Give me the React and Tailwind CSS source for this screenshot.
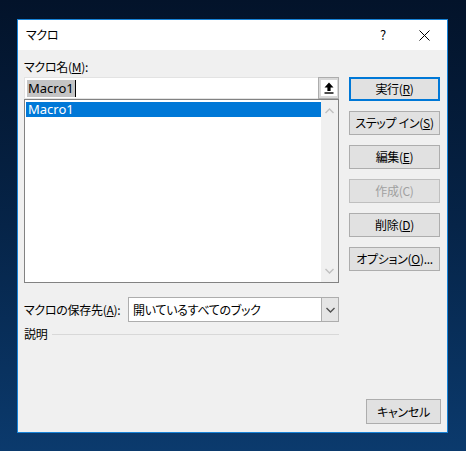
import React from "react";

const Btn = ({ children, primary, disabled }) => (
  <button
    type="button"
    className={
      "h-[24px] w-[91px] bg-[#e1e1e1] text-[12px] leading-none whitespace-nowrap " +
      (primary
        ? "border-2 border-[#0078d7] "
        : "border border-[#adadad] ") +
      (disabled ? "text-[#a0a0a0] border-[#bfbfbf] bg-[#cccccc]" : "text-black")
    }
  >
    {children}
  </button>
);

const Chevron = ({ up, color }) => (
  <svg width="9" height="6" viewBox="0 0 9 6">
    <path
      d={up ? "M0.5 5L4.5 1L8.5 5" : "M0.5 1L4.5 5L8.5 1"}
      fill="none"
      stroke={color}
      strokeWidth="1.4"
    />
  </svg>
);

const App = () => {
  return (
    <div className="w-[466px] h-[451px] overflow-hidden bg-gradient-to-b from-[#03132a] via-[#062448] to-[#0b3a6d] pt-[19px] pl-[17px] font-['Noto_Sans_CJK_JP','Noto_Sans',sans-serif] [font-feature-settings:'palt'] tracking-[-0.3px]">
      <div className="w-[431px] h-[414px] border border-[#1883d7] bg-[#f0f0f0] flex flex-col">
        {/* title bar */}
        <div className="h-[30px] bg-white flex items-center pl-[8px] text-[12px] text-black">
          <span className="flex-1">マクロ</span>
          <span className="w-[20px] text-center mr-[26px] text-[13px]">?</span>
          <svg width="11" height="11" viewBox="0 0 11 11" className="mr-[17px]">
            <path d="M0.5 0.5L10.5 10.5M10.5 0.5L0.5 10.5" stroke="#000" strokeWidth="1" />
          </svg>
        </div>

        <div className="flex-1 flex flex-col pl-[6px] pr-[6px] pb-[8px] text-[12px] text-black">
          <div className="mt-[9px] h-[16px] leading-[16px]">
            マクロ名(<u>M</u>):
          </div>

          <div className="mt-[2px] flex gap-[10px]">
            {/* left column */}
            <div className="w-[315px] flex flex-col">
              <div className="h-[22px] bg-white border border-[#e3e3e3] border-r-0 flex items-center">
                <div className="flex-1 flex items-center pl-[2px]">
                  <span className="bg-[#c4c4c4] text-[13px] leading-[17px] px-[1px] font-['Noto_Sans',sans-serif] tracking-normal">
                    Macro1
                  </span>
                  <span className="w-px h-[17px] bg-black" />
                </div>
                <div className="w-[21px] h-[22px] bg-[#d9d9d9] border border-[#adadad] flex items-center justify-center">
                  <div className="w-[16px] h-[16px] bg-white flex items-center justify-center">
                    <svg width="10" height="12" viewBox="0 0 10 12">
                      <path d="M5 0.5L9.5 5.5H6.6V9H3.4V5.5H0.5Z" fill="#000" />
                      <rect x="0.5" y="10.3" width="9" height="1.4" fill="#000" />
                    </svg>
                  </div>
                </div>
              </div>
              <div className="h-[184px] bg-white border border-[#828282] flex">
                <div className="flex-1 pt-[2px] pl-[1px]">
                  <div className="h-[15px] bg-[#0078d7] text-white text-[13px] leading-[15px] pl-[2px] font-['Noto_Sans',sans-serif] tracking-normal">
                    Macro1
                  </div>
                </div>
                <div className="w-[17px] bg-[#f0f0f0] flex flex-col items-center justify-between py-[8px]">
                  <Chevron up color="#c0c0c0" />
                  <Chevron color="#c0c0c0" />
                </div>
              </div>
            </div>

            {/* buttons */}
            <div className="flex flex-col gap-[10px]">
              <Btn primary>
                実行(<u>R</u>)
              </Btn>
              <Btn>
                ステップ イン(<u>S</u>)
              </Btn>
              <Btn>
                編集(<u>E</u>)
              </Btn>
              <Btn disabled>作成(C)</Btn>
              <Btn>
                削除(<u>D</u>)
              </Btn>
              <Btn>
                オプション(<u>O</u>)...
              </Btn>
            </div>
          </div>

          <div className="mt-[14px] w-[315px] flex items-center">
            <span className="w-[104px]">
              マクロの保存先(<u>A</u>):
            </span>
            <div className="flex-1 h-[25px] bg-white border border-[#adadad] flex items-center">
              <span className="flex-1 pl-[4px]">開いているすべてのブック</span>
              <div className="w-[17px] h-full bg-[#e5e5e5] border-l border-[#adadad] flex items-center justify-center">
                <Chevron color="#505050" />
              </div>
            </div>
          </div>

          <div className="mt-[3px] w-[315px] flex items-center gap-[5px]">
            <span>説明</span>
            <div className="flex-1 border-t border-[#d8d8d8]" />
          </div>

          <div className="mt-auto flex justify-end">
            <button
              type="button"
              className="h-[25px] w-[75px] bg-[#e1e1e1] border border-[#adadad] text-[12px]"
            >
              キャンセル
            </button>
          </div>
        </div>
      </div>
    </div>
  );
};

export default App;
